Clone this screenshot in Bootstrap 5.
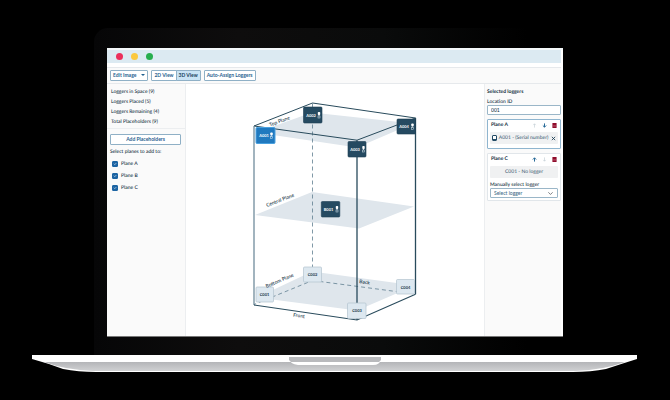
<!DOCTYPE html>
<html lang="en">
<head>
<meta charset="utf-8">
<meta name="viewport" content="width=device-width, initial-scale=1">
<title>Logger placement</title>
<link href="https://cdn.jsdelivr.net/npm/bootstrap@5.3.0/dist/css/bootstrap.min.css" rel="stylesheet">
<style>
body{background:#000;color:#0f2b3a;font-family:Lato,"Open Sans",sans-serif;font-size:5px;font-weight:500;line-height:6px;text-rendering:geometricPrecision}
.laptop{padding:28px 0 27px}
.lid{margin:0 94px;padding:20px 13px 18px;background:linear-gradient(90deg,#060607,#0e0d0d 30%,#0a0b0b 60%,#000 90%);border-radius:14px 14px 0 0}
.screen{background:#fff;border-top:2px solid #f4f8fa;border-bottom:1px solid #777}
.titlebar{height:13px;padding-left:9px;gap:8px;margin-right:2px;background:#dceaf2}
.dot{width:7px;height:7px}
.dot-red{background:#eb2f5b}
.dot-yellow{background:#fbc83e}
.dot-green{background:#27ae4e}
.toolbar{height:17px;margin:4px 2px 0 0;padding:0 3px;gap:3px;background:#fafafa;border:solid #e6e9ec;border-width:1px 0}
.tool{--bs-btn-padding-x:2px;--bs-btn-padding-y:1px;--bs-btn-font-size:5px;--bs-btn-line-height:7px;--bs-btn-border-radius:1px;--bs-btn-font-weight:700;--bs-btn-color:#1f6090;--bs-btn-bg:#fff;--bs-btn-border-color:#8fb0c6;--bs-btn-hover-bg:#e3f1fa;--bs-btn-hover-color:#1c527b;--bs-btn-hover-border-color:#6b9bbb;--bs-btn-active-bg:#c9e4f5;--bs-btn-active-color:#143c59;--bs-btn-active-border-color:#8fb0c6}
.tool-menu::after{margin-left:5px;border-width:2px 2px 0;vertical-align:1px}
.side{background:#fafafa;border:0 solid #eceef0}
.side-left{width:79px;border-right-width:1px}
.side-right{width:77px;border-left-width:1px;margin-right:2px;padding:5px 0 0 2px}
.counts{padding:5px 3px 3px 4px;gap:4px;border-bottom:1px solid #eceef0}
.planes{padding:5px 4px 0 3px}
.plane-check{gap:3px;margin-top:6px;padding-left:2px}
.plane-check .form-check-input{width:6px;height:6px;margin:0;float:none;border-radius:1px}
.form-check-input:checked{background-color:#1d65a4;border-color:#1d65a4}
.field{font-size:5px;line-height:6px;padding:1px 3px;border:1px solid #9ab6c8;border-radius:1px;color:#12303f;min-height:0;font-weight:500}
.field-select{padding:1px 12px 1px 3px;color:#426c8a;background-size:5px;background-position:right 4px center}
.plane-card{padding:2px;border:1px solid #e1e6ea;border-radius:1px;background:#fff}
.plane-card.chosen{border-color:#8fb5cf}
.plane-card.chosen .chip{margin-bottom:2px}
.plane-head{gap:4px;padding:0 1px}
.mini{width:6px;height:6px;line-height:0}
.mini svg{width:5px;height:5px}
.chip{height:12px;padding:0 2px;background:#f0f1f2;color:#456377;border-radius:1px}
.scene text{font-family:Lato,"Open Sans",sans-serif;fill:#12303f}
.scene .tag{font-size:4px;font-weight:700;text-anchor:middle}
.scene .lit{fill:#fff}
.base{margin:0 32px 0 31px;height:18px}
</style>
</head>
<body>
<div class="laptop min-vh-100 d-flex flex-column">
 <div class="lid flex-grow-1 d-flex flex-column">
  <div class="screen flex-grow-1 d-flex flex-column">
   <div class="titlebar d-flex align-items-center">
    <span class="dot dot-red rounded-circle"></span>
    <span class="dot dot-yellow rounded-circle"></span>
    <span class="dot dot-green rounded-circle"></span>
   </div>
   <div class="toolbar d-flex align-items-center">
    <button type="button" class="btn tool tool-menu dropdown-toggle">Edit Image</button>
    <div class="btn-group" role="group" aria-label="View">
     <button type="button" class="btn tool">2D View</button>
     <button type="button" class="btn tool active">3D View</button>
    </div>
    <button type="button" class="btn tool">Auto-Assign Loggers</button>
   </div>
   <div class="d-flex flex-grow-1">
    <aside class="side side-left flex-shrink-0">
     <div class="counts d-flex flex-column">
      <div>Loggers in Space (9)</div>
      <div>Loggers Placed (5)</div>
      <div>Loggers Remaining (4)</div>
      <div>Total Placeholders (9)</div>
     </div>
     <div class="planes">
      <button type="button" class="btn tool w-100 d-block">Add Placeholders</button>
      <div class="mt-1">Select planes to add to:</div>
      <div class="plane-check d-flex align-items-center"><input class="form-check-input" type="checkbox" id="pa" checked><label for="pa">Plane A</label></div>
      <div class="plane-check d-flex align-items-center"><input class="form-check-input" type="checkbox" id="pb" checked><label for="pb">Plane B</label></div>
      <div class="plane-check d-flex align-items-center"><input class="form-check-input" type="checkbox" id="pc" checked><label for="pc">Plane C</label></div>
     </div>
    </aside>
    <main class="flex-grow-1 d-flex">
     <svg class="scene w-100" viewBox="186 84 298 251" role="img" aria-label="Logger positions in 3D">
      <defs>
       <g id="probe"><rect x="-1.2" y="-3" width="2.4" height="3" rx=".7" fill="#fff"/><path d="M0 0v1" stroke="#fff" stroke-width=".7"/><rect x="-1" y="1" width="2" height="2" fill="none" stroke="#dce9f1" stroke-width=".5"/></g>
      </defs>
      <g fill="#dfe6ec">
       <path d="M256 132L312 112 413 123 357 147z"/>
       <path d="M255 214.500L312 191.500 414 206 359 228z"/>
       <path d="M257 297L312 271 415 285 357 310z"/>
      </g>
      <g fill="none" stroke="#607f91" stroke-width=".8" stroke-dasharray="4 3">
       <path d="M312.500 103V280L254 304"/><path d="M312.500 280L415 293.500"/>
      </g>
      <path d="M254 125.500L312.500 102.500 415.500 117.500 357 139.700z" fill="none" stroke="#294b5c"/>
      <path d="M254 125.500V304.500" stroke="#708c9c" stroke-width="1.300"/>
      <path d="M357 139.700V319.500M415.500 117.500V293.700" stroke="#294b5c" stroke-width="1.300"/>
      <path d="M254 304.500L357 319.500 415.500 293.700" fill="none" stroke="#294b5c" stroke-width="1.200"/>
      <g fill="#254a61" stroke="#1b3d52" stroke-width=".6">
       <rect x="303.500" y="106.500" width="18.500" height="16" rx="1"/>
       <rect x="348" y="141" width="18" height="15.500" rx="1"/>
       <rect x="397" y="118.500" width="18.500" height="15" rx="1"/>
       <rect x="321.300" y="201" width="18.500" height="15.500" rx="1"/>
      </g>
      <rect x="256" y="127" width="19" height="16" rx="1" fill="#2079bf" stroke="#4aa1df"/>
      <g fill="#dde8f0" stroke="#b3c3cf" stroke-width=".7">
       <rect x="256" y="286.500" width="17.500" height="15" rx="1"/>
       <rect x="303.500" y="266.500" width="18" height="15" rx="1"/>
       <rect x="347.500" y="302.500" width="18.500" height="15.500" rx="1"/>
       <rect x="396.500" y="279" width="18" height="14.500" rx="1"/>
      </g>
      <g>
       <text class="tag lit" x="264" y="136.500">A001</text><use href="#probe" x="271.500" y="135"/>
       <text class="tag lit" x="311" y="116">A002</text><use href="#probe" x="319" y="114.500"/>
       <text class="tag lit" x="355" y="150.500">A003</text><use href="#probe" x="363.500" y="148.500"/>
       <text class="tag lit" x="404" y="127.500">A004</text><use href="#probe" x="412.500" y="126"/>
       <text class="tag lit" x="328.500" y="210">B001</text><use href="#probe" x="337" y="208.500"/>
       <text class="tag" x="264.500" y="295.500">C001</text>
       <text class="tag" x="312.500" y="275.500">C002</text>
       <text class="tag" x="357" y="311.500">C003</text>
       <text class="tag" x="405.500" y="288">C004</text>
      </g>
      <g font-size="5">
       <text transform="translate(270 126) rotate(-20)">Top Plane</text>
       <text transform="translate(267 206.500) rotate(-21)">Central Plane</text>
       <text transform="translate(266.500 287.500) rotate(-23)">Bottom Plane</text>
       <text transform="translate(359 282.500) rotate(8)">Back</text>
       <text transform="translate(293 316) rotate(8)">Front</text>
      </g>
     </svg>
    </main>
    <aside class="side side-right flex-shrink-0">
     <div class="fw-bold">Selected loggers</div>
     <label for="loc" class="d-block mt-1">Location ID</label>
     <input id="loc" class="form-control field" value="001">
     <section class="plane-card chosen mt-1">
      <div class="plane-head d-flex align-items-center"><span class="fw-bold me-auto">Plane A</span>
       <button type="button" class="btn p-0 border-0 mini" aria-label="Move up" disabled><svg viewBox="0 0 12 12" fill="none" stroke="#9fb0bc" stroke-width="1.500"><path d="M6 11V2M3 5l3-3 3 3"/></svg></button>
       <button type="button" class="btn p-0 border-0 mini" aria-label="Move down"><svg viewBox="0 0 12 12" fill="none" stroke="#286a98" stroke-width="2.400"><path d="M6 1v9M2 6l4 4 4-4"/></svg></button>
       <button type="button" class="btn p-0 border-0 mini" aria-label="Delete"><svg viewBox="0 0 12 12"><path d="M1 0h10v12H1z" fill="#8f0c2b"/><path d="M4.500 5v4M7.500 5v4" stroke="#efb9c3"/></svg></button>
      </div>
      <div class="chip d-flex align-items-center justify-content-between text-nowrap mt-1">
       <svg width="5" height="6" viewBox="0 0 10 12"><rect x="1" y="1" width="8" height="10" rx="1" fill="#fff" stroke="#244c66" stroke-width="2"/><path d="M1 9h8" stroke="#244c66" stroke-width="2"/></svg>
       <span>A001 - (Serial number)</span>
       <button type="button" class="btn p-0 border-0 mini" aria-label="Remove"><svg viewBox="0 0 12 12" stroke="#183a50" stroke-width="2"><path d="M2 2l8 8M10 2l-8 8"/></svg></button>
      </div>
     </section>
     <section class="plane-card mt-1">
      <div class="plane-head d-flex align-items-center"><span class="fw-bold me-auto">Plane C</span>
       <button type="button" class="btn p-0 border-0 mini" aria-label="Move up"><svg viewBox="0 0 12 12" fill="none" stroke="#286a98" stroke-width="2.400"><path d="M6 11V2M2 6l4-4 4 4"/></svg></button>
       <button type="button" class="btn p-0 border-0 mini" aria-label="Move down" disabled><svg viewBox="0 0 12 12" fill="none" stroke="#9fb0bc" stroke-width="1.500"><path d="M6 1v9M3 7l3 3 3-3"/></svg></button>
       <button type="button" class="btn p-0 border-0 mini" aria-label="Delete"><svg viewBox="0 0 12 12"><path d="M1 0h10v12H1z" fill="#8f0c2b"/><path d="M4.500 5v4M7.500 5v4" stroke="#efb9c3"/></svg></button>
      </div>
      <div class="chip d-flex align-items-center justify-content-center mt-1">C001 - No logger</div>
      <label for="pick" class="d-block mt-1">Manually select logger</label>
      <select id="pick" class="form-select field field-select"><option>Select logger</option></select>
     </section>
    </aside>
   </div>
  </div>
 </div>
 <svg class="base" viewBox="0 0 607 18" preserveAspectRatio="none" aria-hidden="true">
  <defs><linearGradient id="metal" x2="0" y2="1"><stop offset="0" stop-color="#b4b5b8"/><stop offset="1" stop-color="#d0d1d3"/></linearGradient></defs>
  <path d="M1 0H606V4Q590 9 575 14 560 17 542 17H65Q47 17 32 14 16 8 1 4z" fill="#fff"/>
  <path d="M13 7H594Q572 15 545 16H62Q35 15 13 7z" fill="url(#metal)"/>
  <path d="M258 0H350V4Q349 10 342 10H267Q259 9 258 4z" fill="#fff"/>
  <path d="M258 2H350V5L348 7H260L258 5z" fill="#b9babd"/>
 </svg>
</div>
<script src="https://cdn.jsdelivr.net/npm/bootstrap@5.3.0/dist/js/bootstrap.bundle.min.js"></script>
</body>
</html>
